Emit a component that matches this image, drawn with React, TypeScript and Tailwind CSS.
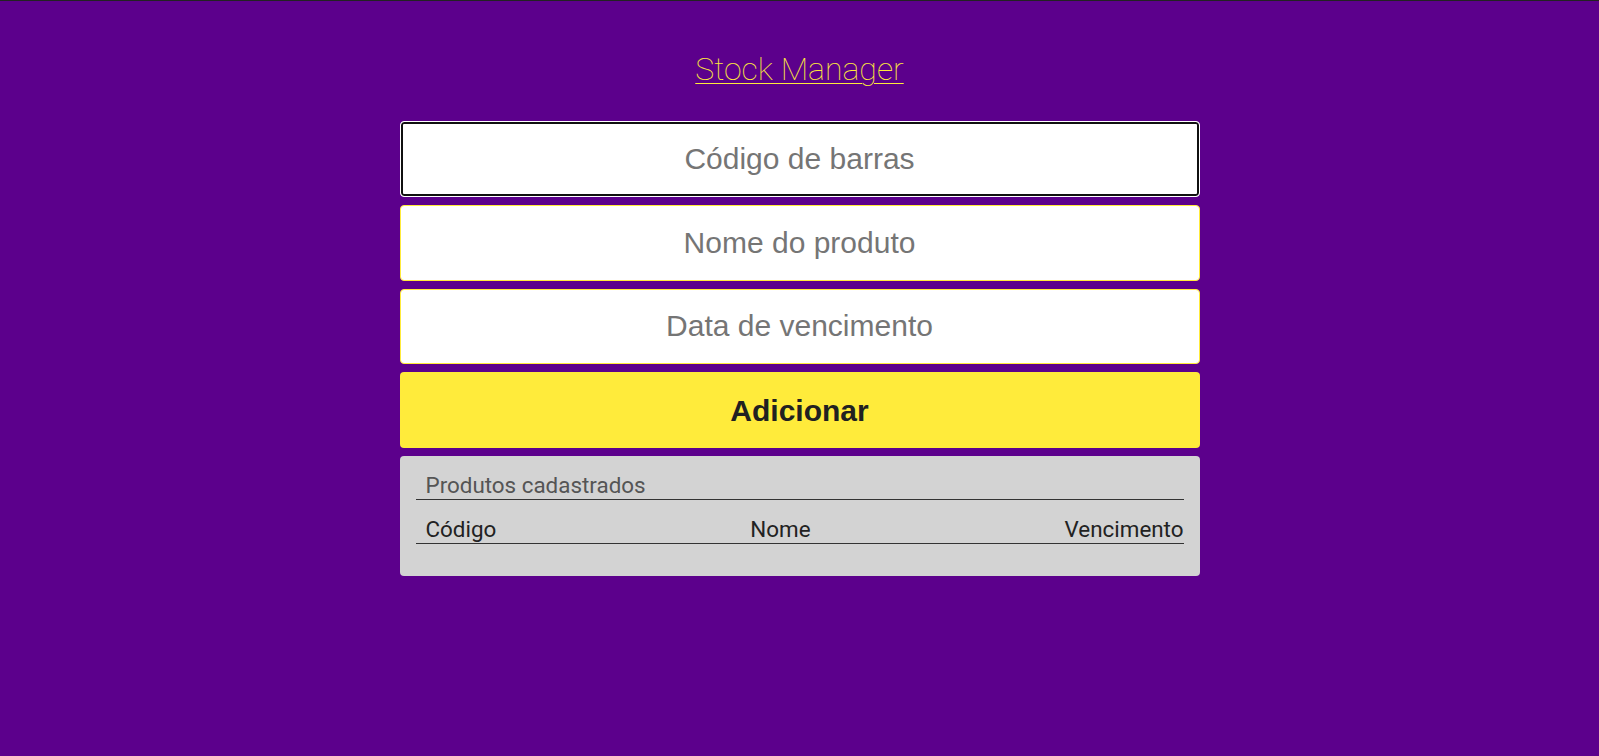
const fields = ["Código de barras", "Nome do produto", "Data de vencimento"];

const App = () => {
  return (
    <main className="min-h-[756px] bg-[#5c008c] border-t border-[#222] flex flex-col items-center pt-[49px] font-['Roboto',sans-serif]">
      <h1 className="text-[32px] leading-[38px] font-thin text-[#ffeb3b] underline underline-offset-[3px] decoration-1">
        Stock Manager
      </h1>

      <form className="w-[800px] mt-[33px] flex flex-col gap-2 font-['Liberation_Sans',Arial,sans-serif]">
        {fields.map((f, i) => (
          <input
            key={f}
            placeholder={f}
            className={
              i === 0
                ? "h-[75.75px] w-full rounded-[4px] bg-white border border-white shadow-[inset_0_0_0_2px_#101010] text-center text-[30px] text-[#212121] placeholder:text-[#757575] outline-none"
                : "h-[75.75px] w-full rounded-[4px] bg-white border border-[#ffeb3b] text-center text-[30px] text-[#212121] placeholder:text-[#757575] outline-none"
            }
          />
        ))}
        <button
          type="button"
          className="h-[75.75px] w-full rounded-[4px] bg-[#ffeb3b] text-[30px] font-bold text-[#212121]"
        >
          Adicionar
        </button>

        <section className="rounded-[4px] bg-[#d3d3d3] px-4 pt-4 pb-[32px] font-['Roboto',sans-serif] text-[22.4px] leading-[26px]">
          <h2 className="pl-[10px] text-[#555] border-b border-[#333] pb-[1px]">
            Produtos cadastrados
          </h2>
          <div className="mt-4 pl-[10px] flex justify-between text-[#222] border-b border-[#333] pb-[1px]">
            <span>Código</span>
            <span>Nome</span>
            <span>Vencimento</span>
          </div>
        </section>
      </form>
    </main>
  );
};

export default App;
